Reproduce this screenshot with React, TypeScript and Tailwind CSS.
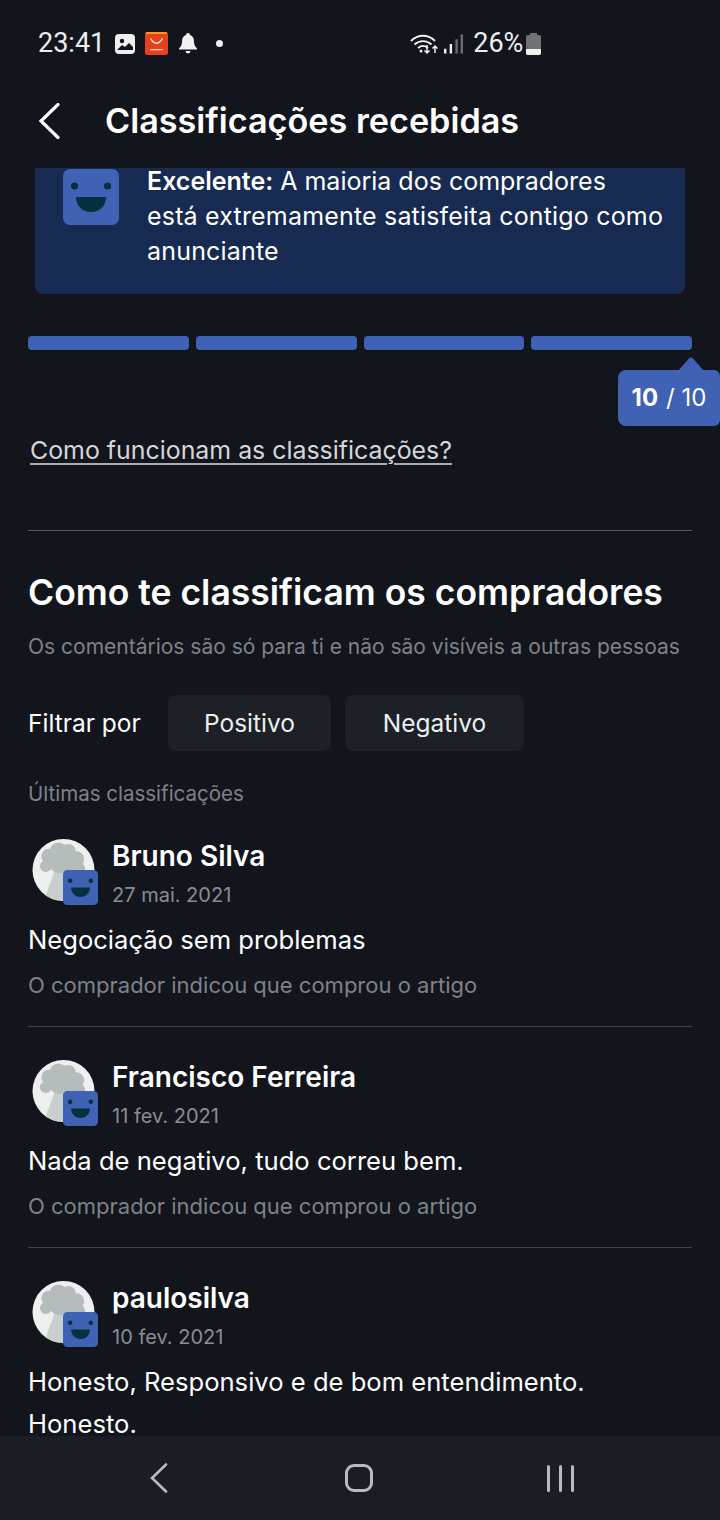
import React from "react";

const font = "font-['Inter','Noto_Sans',sans-serif]";

interface Review {
  name: string;
  date: string;
  text: string;
  note?: string;
}

const reviews: Review[] = [
  {
    name: "Bruno Silva",
    date: "27 mai. 2021",
    text: "Negociação sem problemas",
    note: "O comprador indicou que comprou o artigo",
  },
  {
    name: "Francisco Ferreira",
    date: "11 fev. 2021",
    text: "Nada de negativo, tudo correu bem.",
    note: "O comprador indicou que comprou o artigo",
  },
  {
    name: "paulosilva",
    date: "10 fev. 2021",
    text: "Honesto, Responsivo e de bom entendimento. Honesto.",
  },
];

function Smiley({ className }: { className: string }) {
  return (
    <svg viewBox="0 0 56 56" className={className}>
      <rect width="56" height="56" rx="7" fill="#3f62b4" />
      <circle cx="11.500" cy="17" r="3.600" fill="#04303f" />
      <circle cx="44.500" cy="17" r="3.600" fill="#04303f" />
      <path d="M13 28h30c0 9-6.500 15-15 15s-15-6-15-15z" fill="#04303f" />
    </svg>
  );
}

function Avatar() {
  return (
    <div className="relative w-[71px] h-[68px] shrink-0">
      <svg viewBox="0 0 64 64" className="w-[63px] h-[64px] ml-[4px]">
        <circle cx="32" cy="32" r="31.500" fill="#eef0f0" />
        <path d="M24 30l8 0 12 30-8 3-14-1-8-4z" fill="#c9cfcf" />
        <g fill="#b4bcbc">
          <circle cx="17" cy="18" r="7.500" />
          <circle cx="27" cy="13" r="9" />
          <circle cx="37" cy="13" r="7.500" />
          <circle cx="45" cy="21" r="8" />
          <circle cx="47" cy="31" r="7" />
          <circle cx="14" cy="28" r="6" />
          <circle cx="28" cy="24" r="11" />
          <circle cx="38" cy="30" r="7" />
        </g>
      </svg>
      <Smiley className="absolute left-[35px] top-[32px] w-[35px] h-[35px]" />
    </div>
  );
}

function ReviewRow({ review, last }: { review: Review; last: boolean }) {
  return (
    <div className={last ? "pt-[10px]" : "pt-[10px] h-[199px] mb-[22px] border-b border-[#41444b]"}>
      <div className="flex gap-[13px]">
        <Avatar />
        <div>
          <div className="text-[28px] leading-[36px] font-semibold text-white">{review.name}</div>
          <div className="text-[20px] leading-[36px] text-[#8a8d92] mt-[3px]">{review.date}</div>
        </div>
      </div>
      <p className="text-[25.600px] leading-[42px] text-white mt-[6px]">{review.text}</p>
      {review.note && (
        <p className="text-[22px] leading-[32px] text-[#7f8287] mt-[8px]">{review.note}</p>
      )}
    </div>
  );
}

function StatusBar() {
  return (
    <div className="h-[84px] shrink-0 flex items-center pt-[3px] pl-[38px] text-[#eceef0]">
      <span className="text-[27px] font-['Roboto',sans-serif]">23:41</span>
      <svg viewBox="0 0 20 20" className="w-[20px] h-[20px] ml-[10px]">
        <rect width="20" height="20" rx="4" fill="#f0f0f0" />
        <circle cx="7" cy="7" r="2.200" fill="#12151c" />
        <path d="M2 16l5-5 3 2 4-4 4 4v3H2z" fill="#12151c" />
      </svg>
      <svg viewBox="0 0 23 23" className="w-[23px] h-[23px] ml-[10px]">
        <rect width="23" height="23" rx="2.500" fill="#e8401c" />
        <rect x="1" width="21" height="2" fill="#f39a1c" />
        <path d="M5.500 6.500Q11.500 16 17.500 6.500" fill="none" stroke="#fff" strokeWidth="1.300" />
        <rect x="5" y="17" width="13" height="1.300" fill="#ffc9b5" />
      </svg>
      <svg viewBox="0 0 18 21" className="w-[18px] h-[21px] ml-[11px]">
        <path d="M9 0a2 2 0 0 1 2 2c3 1 4 3.500 4 6.500 0 3 1 5 3 7v1H0v-1c2-2 3-4 3-7C3 5.500 4 3 7 2a2 2 0 0 1 2-2z" fill="#f0f0f0" />
        <path d="M6.500 18h5a2.500 2.500 0 0 1-5 0z" fill="#f0f0f0" />
      </svg>
      <span className="w-[7px] h-[7px] rounded-full bg-[#f0f0f0] ml-[19px]" />

      <svg viewBox="0 0 28 22" className="w-[28px] h-[22px] ml-[187px]" fill="none">
        <path d="M1 8c7-7 17-7 24 0" stroke="#f0f0f0" strokeWidth="1.800" />
        <path d="M4.500 11.500c5-4.500 12-4.500 17 0" stroke="#f0f0f0" strokeWidth="1.800" />
        <path d="M8 15c3-2.500 7-2.500 10 0" stroke="#f0f0f0" strokeWidth="1.800" />
        <circle cx="11" cy="18" r="1.500" fill="#f0f0f0" />
        <path d="M17 12v8m-2.500-2.500L17 20l2.500-2.500M25 20v-7m-2.500 2.500L25 13l2.500 2.500" stroke="#f0f0f0" strokeWidth="1.500" />
      </svg>
      <svg viewBox="0 0 20 20" className="w-[19px] h-[20px] ml-[6px]">
        <rect x="0" y="15" width="2.500" height="5" fill="#f0f0f0" />
        <rect x="6" y="10" width="2.500" height="10" fill="#f0f0f0" />
        <rect x="12" y="5" width="2.500" height="15" fill="#6b6e73" />
        <rect x="17.500" y="0" width="2.500" height="20" fill="#6b6e73" />
      </svg>
      <span className="text-[27px] font-['Roboto',sans-serif] ml-[10px]">26%</span>
      <svg viewBox="0 0 15 22" className="w-[15px] h-[22px] ml-[3px]">
        <path d="M4 0h7v2h2a2 2 0 0 1 2 2v16a2 2 0 0 1-2 2H2a2 2 0 0 1-2-2V4a2 2 0 0 1 2-2h2z" fill="#6f7175" />
        <path d="M0 16h15v4a2 2 0 0 1-2 2H2a2 2 0 0 1-2-2z" fill="#f0f0f0" />
      </svg>
    </div>
  );
}

export default function App() {
  return (
    <div className={`w-[720px] h-[1520px] flex flex-col overflow-hidden bg-[#12151c] ${font}`}>
      <StatusBar />

      <div className="h-[84px] shrink-0 flex items-center pl-[38px] pb-[10px]">
        <svg viewBox="0 0 22 36" className="w-[22px] h-[36px]" fill="none">
          <path d="M20 1.500L3 18l17 16.500" stroke="#fff" strokeWidth="3.200" strokeLinecap="round" />
        </svg>
        <h1 className="text-[34.200px] font-semibold text-white ml-[45px]">Classificações recebidas</h1>
      </div>

      <div className="flex-1 min-h-0 overflow-hidden">
        <div className="mx-[35px] h-[126px] bg-[#172a52] rounded-b-[8px] flex pl-[28px]">
          <Smiley className="w-[56px] h-[56px] mt-[1px] shrink-0" />
          <div className="ml-[28px] text-[25px] text-white">
            <p className="leading-[26px]">
              <b className="font-semibold">Excelente:</b> A maioria dos compradores
            </p>
            <p className="leading-[35px] mt-[5px] tracking-[0.180px]">
              está extremamente satisfeita contigo como
              <br />
              anunciante
            </p>
          </div>
        </div>

        <div className="px-[28px] mt-[42px]">
          <div className="flex gap-[7px]">
            {[0, 1, 2, 3].map((i) => (
              <div key={i} className="flex-1 h-[14px] rounded-[4px] bg-[#3f62b4]" />
            ))}
          </div>
        </div>

        <div className="flex justify-end mt-[20px] h-[56px]">
          <div className="relative w-[102px] h-[56px] rounded-l-[8px] rounded-r-[6px] bg-[#3f62b4] flex items-center justify-center text-[24px] text-white">
            <svg viewBox="0 0 26 14" className="absolute right-[16px] -top-[13px] w-[26px] h-[14px]">
              <path d="M0 14L11 1.500a2.500 2.500 0 0 1 4 0L26 14z" fill="#3f62b4" />
            </svg>
            <b className="font-bold">10</b>
            <span className="ml-[8px]">/ 10</span>
          </div>
        </div>

        <div className="px-[28px]">
          <a className="block ml-[2px] mt-[6px] text-[24.900px] leading-[36px] text-[#d5d6d8] underline underline-offset-[4px] decoration-[2px] decoration-[#a9abaf]">
            Como funcionam as classificações?
          </a>

          <div className="border-t border-[#55585e] mt-[62px]" />

          <h2 className="text-[35.500px] leading-[48px] font-semibold text-white mt-[38px]">
            Como te classificam os compradores
          </h2>
          <p className="text-[21px] leading-[32px] text-[#7f8287] mt-[14px]">
            Os comentários são só para ti e não são visíveis a outras pessoas
          </p>

          <div className="flex items-center mt-[32px]">
            <span className="text-[24.500px] text-white w-[140px]">Filtrar por</span>
            <button className="h-[56px] w-[163px] rounded-[8px] bg-[#1d2026] text-[24.500px] text-[#eceef0]">Positivo</button>
            <button className="h-[56px] w-[179px] ml-[14px] rounded-[8px] bg-[#1d2026] text-[24.500px] text-[#eceef0]">Negativo</button>
          </div>

          <p className="text-[20.500px] leading-[32px] text-[#7f8287] mt-[27px]">Últimas classificações</p>

          <div className="mt-[18px]">
            {reviews.map((r, i) => (
              <ReviewRow key={r.name} review={r} last={i === reviews.length - 1} />
            ))}
          </div>
        </div>
      </div>

      <div className="h-[84px] shrink-0 bg-[#1a1d24] flex items-center">
        <svg viewBox="0 0 18 30" className="w-[18px] h-[30px] ml-[150px]" fill="none">
          <path d="M16 1.500L2 15l14 13.500" stroke="#b9bbbe" strokeWidth="2.600" strokeLinecap="round" />
        </svg>
        <div className="w-[28px] h-[28px] ml-[177px] rounded-[9px] border-[3px] border-[#b9bbbe]" />
        <div className="flex gap-[9px] ml-[174px]">
          <span className="w-[3px] h-[27px] rounded-full bg-[#b9bbbe]" />
          <span className="w-[3px] h-[27px] rounded-full bg-[#b9bbbe]" />
          <span className="w-[3px] h-[27px] rounded-full bg-[#b9bbbe]" />
        </div>
      </div>
    </div>
  );
}
